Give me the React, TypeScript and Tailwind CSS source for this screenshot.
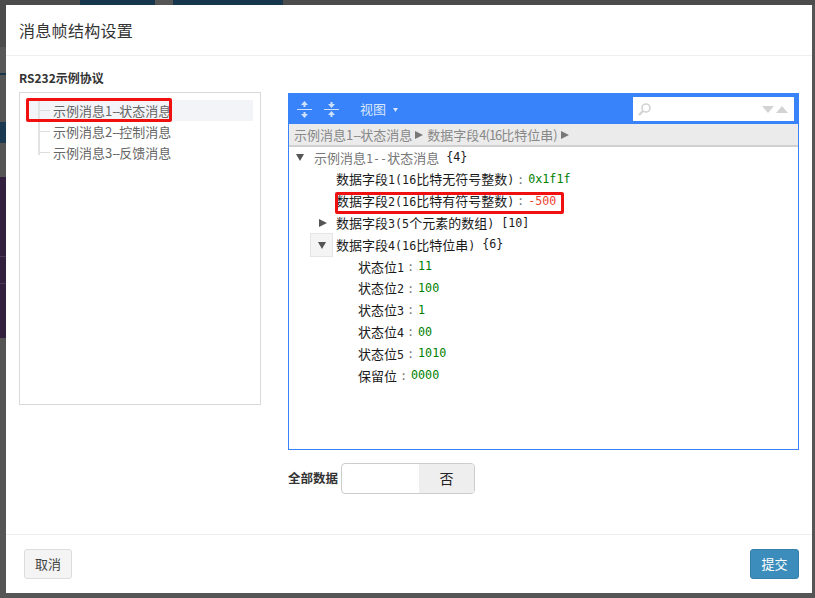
import React from "react";

function T({ text }: { text: string }) {
  const parts = text.split(/([\x20-\x7e]+)/).filter(Boolean);
  return (
    <>
      {parts.map((p, i) =>
        /^[\x20-\x7e]+$/.test(p) ? (
          <span key={i} className="font-['DejaVu_Sans_Mono',monospace] text-[11.7px]">
            {p}
          </span>
        ) : (
          <span key={i}>{p}</span>
        ),
      )}
    </>
  );
}

function Down() {
  return (
    <svg width="8" height="7" viewBox="0 0 8 7" fill="#555">
      <path d="M0 0h8L4 7z" />
    </svg>
  );
}

function Right({ fill = "#555" }: { fill?: string }) {
  return (
    <svg width="8" height="8" viewBox="0 0 8 8" fill={fill}>
      <path d="M0 0l8 4-8 4z" />
    </svg>
  );
}

function Row({ indent, label, value, valueClass }: { indent: string; label: string; value: string; valueClass: string }) {
  return (
    <div className={`flex h-[21.8px] items-center whitespace-nowrap ${indent}`}>
      <span className="text-[#1a1a1a]">
        <T text={label} />
      </span>
      <span className="w-[14px] pr-[1px] text-center font-['DejaVu_Sans_Mono',monospace] text-[12px] text-[#777]">:</span>
      <span className={`font-['DejaVu_Sans_Mono',monospace] text-[11.7px] ${valueClass}`}>{value}</span>
    </div>
  );
}

function Msg({ n, name }: { n: number; name: string }) {
  return (
    <>
      示例消息{n}
      <span className="tracking-[-1px]">--</span>
      {name}
    </>
  );
}

export default function App() {
  return (
    <div className="relative h-[598px] w-[815px] overflow-hidden bg-[#555555] font-['Noto_Sans_CJK_SC','Noto_Sans',sans-serif]">
      <div className="absolute left-0 top-0 flex h-[5px] w-full">
        <div className="w-[80px] bg-[#4c4c4c]" />
        <div className="w-[75px] bg-[#16364d]" />
        <div className="w-[18px] bg-[#555555]" />
        <div className="w-[110px] bg-[#16364d]" />
        <div className="flex-1 bg-[#4c4c4c]" />
      </div>
      <div className="absolute left-0 top-0 flex h-full w-[6px] flex-col">
        <div className="h-[47px] bg-[#4c4c4c]" />
        <div className="h-[26px] bg-[#585858]" />
        <div className="h-[2px] bg-[#16364d]" />
        <div className="h-[47px] bg-[#555555]" />
        <div className="h-[21px] bg-[#1b3a52]" />
        <div className="h-[34px] bg-[#555555]" />
        <div className="h-[80px] border-b border-[#4b3a57] bg-[#33203f]" />
        <div className="h-[27px] border-b border-[#4b3a57] bg-[#33203f]" />
        <div className="h-[54px] bg-[#33203f]" />
      </div>
      <div className="absolute left-[6px] top-[5px] flex h-[588px] w-[806px] flex-col bg-white">
        <div className="flex h-[51px] shrink-0 items-center border-b border-[#eeeeee] pl-[13px] text-[16px] tracking-[0.3px] text-[#333]">
          消息帧结构设置
        </div>
        <div className="flex min-h-0 flex-1 pl-[13px] pr-[13px]">
          <div className="w-[242px] shrink-0">
            <div className="mt-[13px] h-[18px] text-[12px] font-bold leading-[18px] text-[#333]">RS232示例协议</div>
            <div className="relative mt-[5px] h-[313px] border border-[#d9d9d9] pl-[7px] pr-[7px] pt-[7px] text-[13px] text-[#666]">
              <div className="relative flex h-[21px] items-center bg-[#f3f4f8] pl-[26px]">
                <span className="absolute left-[11px] top-[10px] h-px w-[12px] bg-[#dddddd]" />
                <Msg n={1} name="状态消息" />
              </div>
              <div className="relative flex h-[21px] items-center pl-[26px]">
                <span className="absolute left-[11px] top-[10px] h-px w-[12px] bg-[#dddddd]" />
                <Msg n={2} name="控制消息" />
              </div>
              <div className="relative flex h-[21px] items-center pl-[26px]">
                <span className="absolute left-[11px] top-[10px] h-px w-[12px] bg-[#dddddd]" />
                <Msg n={3} name="反馈消息" />
              </div>
              <div className="absolute left-[18px] top-[7px] h-[55px] w-[2px] bg-[#e2e2e2]" />
              <div className="absolute left-[6px] top-[5px] h-[24px] w-[146px] rounded-[2px] border-[3px] border-[#f01010]" />
            </div>
          </div>
          <div className="ml-[27px] flex min-w-0 flex-1 flex-col">
            <div className="mt-[37px] flex h-[357px] flex-col border border-[#3883fa]">
              <div className="flex h-[30px] shrink-0 items-center bg-[#3883fa] text-[13px]">
                <svg className="ml-[8px]" width="15" height="17" viewBox="0 0 15 17" fill="#cfe0fb">
                  <path d="M7.5 0L11 4H8.5v2h-2V4H4z" />
                  <rect x="0" y="8" width="15" height="1" />
                  <path d="M7.5 17L11 13H8.5v-2h-2v2H4z" />
                </svg>
                <svg className="ml-[12px]" width="15" height="17" viewBox="0 0 15 17" fill="#cfe0fb">
                  <path d="M7.5 7L11 3H8.5V1h-2v2H4z" />
                  <rect x="0" y="8" width="15" height="1" />
                  <path d="M7.5 10L11 14H8.5v2h-2v-2H4z" />
                </svg>
                <span className="ml-[21px] text-[#d9e6fd]">视图</span>
                <svg className="ml-[7px] mt-[1px]" width="5" height="4" viewBox="0 0 5 4" fill="#d9e6fd">
                  <path d="M0 0h5L2.5 4z" />
                </svg>
                <div className="ml-auto mr-[4px] flex h-[24px] w-[161px] items-center bg-white pl-[4px] pr-[6px]">
                  <svg width="15" height="15" viewBox="0 0 15 15" fill="none" stroke="#d3d3d3">
                    <circle cx="9" cy="6" r="4" strokeWidth="1.6" />
                    <path d="M6 9l-4 4" strokeWidth="2.4" />
                  </svg>
                  <svg className="ml-auto" width="26" height="7" viewBox="0 0 26 7" fill="#d3d3d3">
                    <path d="M0 0h12L6 7z" />
                    <path d="M14 7h12L20 0z" />
                  </svg>
                </div>
              </div>
              <div className="flex h-[23px] shrink-0 items-center border-b-2 border-[#d0d0d0] bg-[#ebebeb] pl-[5px] text-[13px] text-[#888]">
                <Msg n={1} name="状态消息" />
                <span className="ml-[3px] mr-[4px]">
                  <Right fill="#777" />
                </span>
                数据字段<span className="tracking-[-1px]">4(16</span>比特位串<span className="tracking-[-1px]">)</span>
                <span className="ml-[4px]">
                  <Right fill="#777" />
                </span>
              </div>
              <div className="relative flex-1 text-[13px]">
                <div className="flex h-[21.8px] items-center whitespace-nowrap pl-[7px]">
                  <span className="mr-[10px] flex w-[8px]">
                    <Down />
                  </span>
                  <span className="text-[#777]">
                    <T text="示例消息1--状态消息" />
                  </span>
                  <span className="ml-[7px] font-['DejaVu_Sans_Mono',monospace] text-[11.7px] text-[#1a1a1a]">{"{4}"}</span>
                </div>
                <Row indent="pl-[47px]" label="数据字段1(16比特无符号整数)" value="0x1f1f" valueClass="text-[#008000]" />
                <Row indent="pl-[47px]" label="数据字段2(16比特有符号整数)" value="-500" valueClass="text-[#ee422e]" />
                <div className="flex h-[21.8px] items-center whitespace-nowrap pl-[30px]">
                  <span className="mr-[9px] flex w-[8px]">
                    <Right />
                  </span>
                  <span className="text-[#1a1a1a]">
                    <T text="数据字段3(5个元素的数组)" />
                  </span>
                  <span className="ml-[7px] font-['DejaVu_Sans_Mono',monospace] text-[11.7px] text-[#1a1a1a]">[10]</span>
                </div>
                <div className="flex h-[21.8px] items-center whitespace-nowrap pl-[21px]">
                  <span className="mr-[3px] flex h-[24px] w-[23px] shrink-0 items-center justify-center border border-[#e5e5e5] bg-[#f4f4f4]">
                    <Down />
                  </span>
                  <span className="text-[#1a1a1a]">
                    <T text="数据字段4(16比特位串)" />
                  </span>
                  <span className="ml-[7px] font-['DejaVu_Sans_Mono',monospace] text-[11.7px] text-[#1a1a1a]">{"{6}"}</span>
                </div>
                <Row indent="pl-[69px]" label="状态位1" value="11" valueClass="text-[#008000]" />
                <Row indent="pl-[69px]" label="状态位2" value="100" valueClass="text-[#008000]" />
                <Row indent="pl-[69px]" label="状态位3" value="1" valueClass="text-[#008000]" />
                <Row indent="pl-[69px]" label="状态位4" value="00" valueClass="text-[#008000]" />
                <Row indent="pl-[69px]" label="状态位5" value="1010" valueClass="text-[#008000]" />
                <Row indent="pl-[69px]" label="保留位" value="0000" valueClass="text-[#008000]" />
                <div className="absolute left-[46px] top-[45px] h-[22px] w-[229px] rounded-[2px] border-[3px] border-[#f01010]" />
              </div>
            </div>
            <div className="mt-[13px] flex items-center">
              <span className="text-[12.5px] font-bold text-[#333]">全部数据</span>
              <div className="ml-[3px] flex h-[31px] w-[134px] overflow-hidden rounded-[4px] border border-[#cccccc] bg-white">
                <div className="w-[77px]" />
                <div className="flex flex-1 items-center justify-center bg-[#eeeeee] text-[14px] text-[#222]">否</div>
              </div>
            </div>
          </div>
        </div>
        <div className="flex h-[59px] shrink-0 items-center justify-between border-t border-[#eeeeee] pl-[18px] pr-[13px] text-[13px]">
          <button className="h-[30px] w-[48px] rounded-[3px] border border-[#dddddd] bg-[#f4f4f4] text-[#444]">取消</button>
          <button className="h-[30px] w-[49px] rounded-[3px] border border-[#367fa9] bg-[#3c8dbc] text-white">提交</button>
        </div>
      </div>
    </div>
  );
}
